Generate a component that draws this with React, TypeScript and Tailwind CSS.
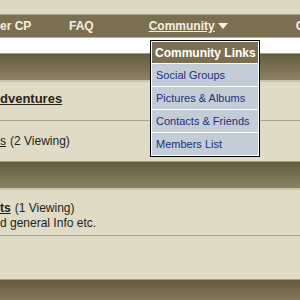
import React from "react";

const font = { fontFamily: '"Liberation Sans", Arial, sans-serif' };

function Band() {
  return (
    <div className="border-t border-[#a39c82]">
      <div className="h-[26px] bg-gradient-to-b from-[#655c40] to-[#8c8264]" />
      <div className="h-[2px] bg-[#c9c3a8]" />
    </div>
  );
}

export default function App() {
  return (
    <div className="relative w-[300px] h-[300px] overflow-hidden bg-[#e0dbc6]" style={font}>
      <div className="h-[14px] bg-[#ddd8c3]" />
      <div className="h-[1px] bg-[#a59e84]" />
      <div className="h-[22px] bg-[#7b6f51] flex items-center text-[12px] font-bold text-[#f3efe3] whitespace-nowrap">
        <span className="w-[24px] shrink-0">er CP</span>
        <span className="ml-[45px] shrink-0">FAQ</span>
        <span className="ml-[55px] flex items-center shrink-0">
          <span className="underline">Community</span>
          <svg width="10" height="6" viewBox="0 0 10 6" className="ml-[3px]">
            <polygon points="0,0 10,0 5,6" fill="#f3efe3" />
          </svg>
        </span>
        <span className="ml-[68px] shrink-0">C</span>
      </div>
      <div className="h-[1px] bg-[#b5ae92]" />
      <div className="h-[15px] bg-white" />
      <Band />
      <div className="h-[42px] flex items-center text-[13px] font-bold text-[#2a2616] -mt-[4px]">
        <span className="underline">dventures</span>
      </div>
      <div className="h-[1px] bg-[#aaa48c]" />
      <div className="h-[40px] flex items-center text-[12px] text-[#222]">
        <span className="underline">s</span>
        <span className="ml-[4px]">(2 Viewing)</span>
      </div>
      <Band />
      <div className="pt-[11px] text-[12px] text-[#222] leading-[15px] h-[45px]">
        <div>
          <span className="underline font-bold">ts</span>
          <span className="ml-[4px]">(1 Viewing)</span>
        </div>
        <div>d general Info etc.</div>
      </div>
      <div className="h-[1px] bg-[#aaa48c]" />
      <div className="h-[43px]" />
      <Band />

      <div className="absolute left-[150px] top-[40px] w-[110px] border border-black bg-white p-[1px] text-[11px] whitespace-nowrap">
        <div className="h-[21px] bg-[#7b6f51] text-white font-bold text-[12px] flex items-center px-[3px]">
          Community Links
        </div>
        {["Social Groups", "Pictures & Albums", "Contacts & Friends", "Members List"].map((t) => (
          <div key={t} className="mt-[1px] h-[22px] bg-[#c2cdd8] text-[#22307a] flex items-center px-[4px]">
            {t}
          </div>
        ))}
      </div>
    </div>
  );
}
